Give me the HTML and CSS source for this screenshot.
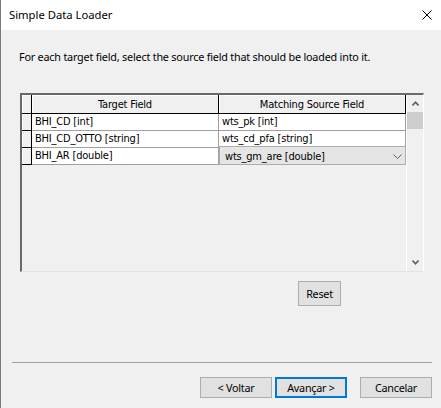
FILE: index.html
```html
<!DOCTYPE html>
<html>
<head>
<meta charset="utf-8">
<link rel="stylesheet" href="styles.css">
</head>
<body>
<div class="window">
  <div class="titlebar">
    <span class="title">Simple Data Loader</span>
    <svg class="close" width="10" height="10" viewBox="0 0 10 10"><path d="M0.5 0.5 L9.5 9.5 M9.5 0.5 L0.5 9.5" stroke="#000" stroke-width="1" fill="none"/></svg>
  </div>
  <div class="body">
    <p class="instruction">For each target field, select the source field that should be loaded into it.</p>
    <div class="gridframe">
      <div class="table">
        <div class="corner"></div>
        <div class="colhdr">Target Field</div>
        <div class="colhdr">Matching Source Field</div>

        <div class="rowhdr"></div>
        <div class="cell">BHI_CD [int]</div>
        <div class="cell">wts_pk [int]</div>

        <div class="rowhdr"></div>
        <div class="cell">BHI_CD_OTTO [string]</div>
        <div class="cell">wts_cd_pfa [string]</div>

        <div class="rowhdr"></div>
        <div class="cell">BHI_AR [double]</div>
        <div class="cell combo-cell">
          <div class="combo">
            <span>wts_gm_are [double]</span>
            <svg width="9" height="5" viewBox="0 0 9 5"><path d="M0.5 0.5 L4.5 4.5 L8.5 0.5" stroke="#606060" stroke-width="1" fill="none"/></svg>
          </div>
        </div>
      </div>
      <div class="vscroll">
        <div class="sbtn"><svg width="7" height="5" viewBox="0 0 7 5"><path d="M0.5 4.5 L3.5 1.2 L6.5 4.5" stroke="#606060" stroke-width="1.6" fill="none"/></svg></div>
        <div class="thumb"></div>
        <div class="track"></div>
        <div class="sbtn"><svg width="7" height="5" viewBox="0 0 7 5"><path d="M0.5 0.5 L3.5 3.8 L6.5 0.5" stroke="#606060" stroke-width="1.6" fill="none"/></svg></div>
      </div>
    </div>
    <div class="reset-row">
      <button class="btn reset">Reset</button>
    </div>
    <div class="separator"></div>
    <div class="footer">
      <button class="btn nav">&lt; Voltar</button>
      <button class="btn nav primary">Avançar &gt;</button>
      <button class="btn nav cancel">Cancelar</button>
    </div>
  </div>
</div>
</body>
</html>
```

FILE: styles.css
```css
* { box-sizing: border-box; }
html, body { margin: 0; padding: 0; }
body {
  width: 441px;
  height: 408px;
  background: #f0f0f0;
  font-family: "Noto Sans", "Open Sans", sans-serif;
  font-size: 11.25px;
  color: #000;
  overflow: hidden;
}
.window {
  width: 441px;
  height: 408px;
  border-left: 1px solid #7a7a7a;
  display: flex;
  flex-direction: column;
}
.titlebar {
  height: 30px;
  background: #fff;
  display: flex;
  align-items: center;
  justify-content: space-between;
  padding: 0 9px 0 8px;
}
.title { font-size: 11.25px; line-height: 16px; }
.close { display: block; }

.body { flex: 1; display: flex; flex-direction: column; }
.instruction {
  margin: 19px 0 0 18px;
  line-height: 16px;
  height: 16px;
  font-size: 10.8px;
  letter-spacing: -0.2px;
  white-space: nowrap;
}
.gridframe {
  margin: 28px 0 0 19px;
  width: 404px;
  height: 179px;
  border-top: 2px solid #696969;
  border-left: 2px solid #696969;
  border-bottom: 1px solid #e3e3e3;
  border-right: 1px solid #fff;
  display: flex;
  background: #f0f0f0;
}
.table {
  display: grid;
  grid-template-columns: 10px 187px 187px;
  grid-template-rows: 19px 17px 17px 17px;
  align-content: start;
  font-family: "DejaVu Sans Condensed", "DejaVu Sans", sans-serif;
  font-stretch: condensed;
  font-size: 11px;
  letter-spacing: -0.2px;
}
.corner, .rowhdr {
  background: #f0f0f0;
  border-right: 1px solid #000;
  border-bottom: 1px solid #000;
  box-shadow: inset 1px 1px 0 #fff;
}
.colhdr {
  background: #f0f0f0;
  border-right: 1px solid #000;
  border-bottom: 1px solid #000;
  box-shadow: inset 1px 1px 0 #fff;
  display: flex;
  align-items: center;
  justify-content: center;
  padding-top: 1px;
}
.cell {
  background: #fff;
  border-right: 1px solid #a0a0a0;
  border-bottom: 1px solid #a0a0a0;
  display: flex;
  align-items: center;
  padding: 0 0 1px 3px;
  line-height: 13px;
  white-space: nowrap;
}
.combo-cell { padding: 0; border: none; background: transparent; align-items: flex-start; }
.combo {
  margin-top: -2px;
  width: 187px;
  height: 19px;
  background: #e5e5e5;
  border: 1px solid #adadad;
  display: flex;
  align-items: center;
  justify-content: space-between;
  padding: 1px 3px 0 5px;
}
.combo svg { display: block; }

.vscroll {
  width: 17px;
  display: flex;
  flex-direction: column;
  background: #f0f0f0;
  box-shadow: inset 1px 0 0 #fff;
}
.sbtn {
  height: 17px;
  display: flex;
  align-items: center;
  justify-content: center;
  padding-left: 1px;
}
.sbtn svg { display: block; }
.thumb {
  height: 17px;
  margin-left: 1px;
  background: #cdcdcd;
}
.track { flex: 1; }

.reset-row {
  display: flex;
  margin: 9px 0 0 297px;
}
.btn {
  font-family: "Noto Sans", "Open Sans", sans-serif;
  font-size: 10.8px;
  letter-spacing: -0.25px;
  color: #000;
  background: #e1e1e1;
  border: 1px solid #adadad;
  padding: 0;
  margin: 0;
  display: flex;
  align-items: center;
  justify-content: center;
}
.reset { width: 43px; height: 25px; }
.separator {
  margin: 56px 9px 0 11px;
  height: 1px;
  background: #a0a0a0;
}
.footer {
  display: flex;
  justify-content: flex-end;
  gap: 3px;
  margin: 14px 9px 0 0;
}
.nav { width: 72px; height: 21px; }
.primary { border: 2px solid #0078d7; }
.cancel { margin-left: 10px; }
```
